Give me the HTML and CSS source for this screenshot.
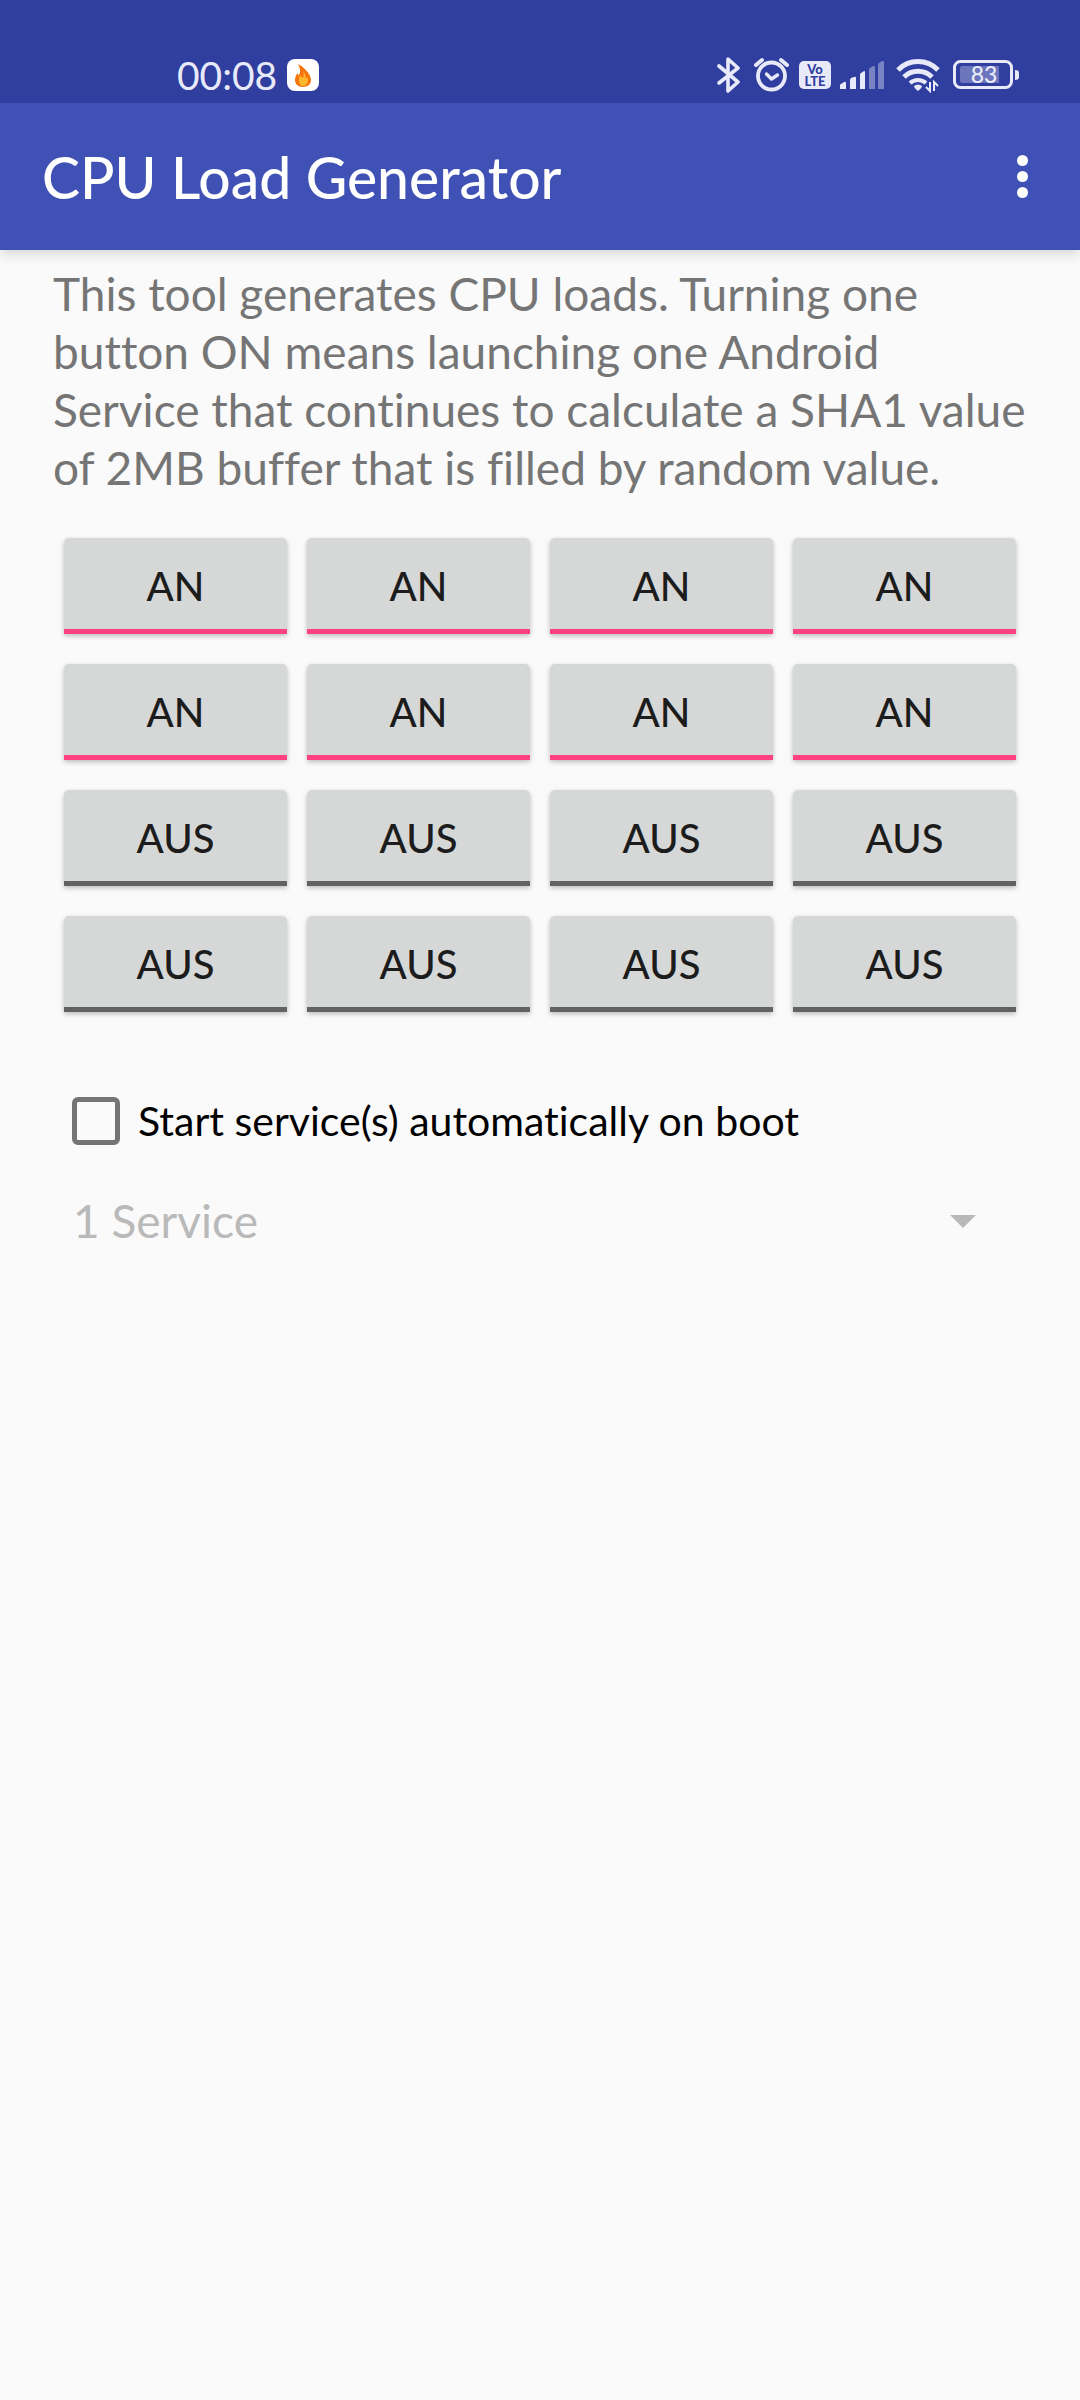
FILE: index.html
```html
<!DOCTYPE html>
<html lang="en">
<head>
    <meta charset="UTF-8">
    <meta name="viewport" content="width=device-width, initial-scale=1.0">
    <title>CPU Load Generator</title>
    <link rel="stylesheet" href="styles.css">
</head>
<body>
    <div class="status-bar">
        <span class="clock">00:08</span>
        <svg class="app-badge" width="32" height="32" viewBox="0 0 32 32">
            <rect width="32" height="32" rx="8" fill="#fff"/>
            <path d="M11 5c4 2 13 9 13 16 0 4-3 7-8 7s-8-3-8-7c0-3 1-5 3-7 0 1 0 2 1 2 2-3 1-7-1-11z" fill="#f5740c"/>
            <path d="M16 12c1 2 1 5 0 7-1-1-2-1-3-3-1 2-1 4-1 5 0 4 2 6 4 6s5-2 5-6c0-1 0-2-1-3l-1 2c-1-4-1-6-3-8z" fill="#fdb92e"/>
        </svg>
        <div class="status-icons">
            <svg width="27" height="36" viewBox="0 0 27 36" fill="none" stroke="#e8eaf9" stroke-width="3.600" stroke-linecap="round" stroke-linejoin="round">
                <path d="M2 9l19 16-10 9V2l10 9L2 26"/>
            </svg>
            <svg width="37" height="36" viewBox="0 0 37 36" fill="none" stroke="#e8eaf9" stroke-linecap="round" stroke-linejoin="round">
                <circle cx="18.500" cy="19" r="13.500" stroke-width="3.800"/>
                <path d="M13.500 17l5 5 6-4" stroke-width="3.400"/>
                <path d="M3 8l6-5M34 8l-6-5" stroke-width="4"/>
            </svg>
            <svg width="32" height="36" viewBox="0 0 32 36">
                <rect y="4" width="32" height="28" rx="5" fill="#e8eaf9"/>
                <text class="volte" x="16" y="17" text-anchor="middle">Vo</text>
                <text class="volte" x="16" y="29" text-anchor="middle">LTE</text>
            </svg>
            <svg width="47" height="36" viewBox="0 0 47 36" fill="#e8eaf9">
                <path d="M0 32v-4q0-1 1-1l3-2q2-1 2 1v6z"/>
                <path d="M10 32V23q0-1 1-2l3-1q2-1 2 1v11z"/>
                <path d="M20 32V18q0-2 1-2l3-2q1 0 1 1v17z"/>
                <path d="M29 32V13q0-2 1-2l3-2q2 0 2 1v22z" opacity="0.4"/>
                <path d="M38 32V8q0-2 1-2l3-2q2 0 2 1v27z" opacity="0.4"/>
            </svg>
            <svg width="48" height="36" viewBox="0 0 48 36" fill="none" stroke="#e8eaf9" stroke-width="5">
                <path d="M2 13a28 28 0 0 1 40 0"/>
                <path d="M8 20a20 20 0 0 1 28 0"/>
                <path d="M14 26a12 12 0 0 1 16 0" stroke-width="4"/>
                <path d="M18 29q4-3 8 0q0 2-4 5q-4-3-4-5z" fill="#e8eaf9" stroke="none"/>
                <path d="M34 25v9l-4-4M38 34v-9l4 4" stroke-width="2"/>
            </svg>
            <svg width="66" height="36" viewBox="0 0 66 36">
                <rect x="1.500" y="4.500" width="57" height="26" rx="6" fill="none" stroke="#e8eaf9" stroke-width="3"/>
                <path d="M9 9h37v17H9q-2 0-2-2V11q0-2 2-2z" fill="#6b75bb"/>
                <path d="M62 13q4 0 4 3v4q0 3-4 3z" fill="#e8eaf9"/>
                <text class="battery-level" x="31" y="26" text-anchor="middle">83</text>
            </svg>
        </div>
    </div>

    <header class="app-bar">
        <h1 class="app-title">CPU Load Generator</h1>
        <button type="button" class="menu-btn" aria-label="More options">
            <span class="dot"></span>
            <span class="dot"></span>
            <span class="dot"></span>
        </button>
    </header>

    <main class="content">
        <p class="description">This tool generates CPU loads. Turning one button ON means launching one Android Service that continues to calculate a SHA1 value of 2MB buffer that is filled by random value.</p>

        <div class="toggles">
            <button type="button" class="toggle on" aria-pressed="true">AN</button>
            <button type="button" class="toggle on" aria-pressed="true">AN</button>
            <button type="button" class="toggle on" aria-pressed="true">AN</button>
            <button type="button" class="toggle on" aria-pressed="true">AN</button>
            <button type="button" class="toggle on" aria-pressed="true">AN</button>
            <button type="button" class="toggle on" aria-pressed="true">AN</button>
            <button type="button" class="toggle on" aria-pressed="true">AN</button>
            <button type="button" class="toggle on" aria-pressed="true">AN</button>
            <button type="button" class="toggle" aria-pressed="false">AUS</button>
            <button type="button" class="toggle" aria-pressed="false">AUS</button>
            <button type="button" class="toggle" aria-pressed="false">AUS</button>
            <button type="button" class="toggle" aria-pressed="false">AUS</button>
            <button type="button" class="toggle" aria-pressed="false">AUS</button>
            <button type="button" class="toggle" aria-pressed="false">AUS</button>
            <button type="button" class="toggle" aria-pressed="false">AUS</button>
            <button type="button" class="toggle" aria-pressed="false">AUS</button>
        </div>

        <div class="boot-row">
            <input type="checkbox" id="startOnBoot" class="checkbox">
            <label for="startOnBoot">Start service(s) automatically on boot</label>
        </div>

        <div class="spinner">
            <select class="spinner-select" aria-label="Number of services" disabled>
                <option>1 Service</option>
            </select>
            <svg class="spinner-arrow" width="26" height="13" viewBox="0 0 26 13">
                <path d="M0 0h26L13 13z" fill="#b9b9b9"/>
            </svg>
        </div>
    </main>
</body>
</html>
```
FILE: styles.css
```css
* {
    box-sizing: border-box;
}

body {
    margin: 0;
    min-height: 100vh;
    background-color: #fafafa;
    font-family: Lato, "Open Sans", sans-serif;
    font-variant-ligatures: none;
}

/* System status bar */
.status-bar {
    position: relative;
    z-index: 1; /* keeps the app bar shadow off it */
    display: flex;
    align-items: center;
    height: 103px;
    padding: 47px 61px 0 177px;
    background-color: #303f9f;
    color: #e8eaf9;
}

.clock {
    font-size: 39px;
    line-height: 48px;
}

.app-badge {
    margin-left: 10px;
}

.status-icons {
    display: flex;
    gap: 9px;
    margin-left: auto;
}

.volte {
    fill: #303f9f;
    font-size: 13px;
    font-weight: 900;
}

.battery-level {
    fill: #e8eaf9;
    font-size: 23px;
    font-weight: 500;
}

/* App bar */
.app-bar {
    position: relative;
    display: flex;
    align-items: center;
    justify-content: space-between;
    height: 147px;
    padding: 0 42px;
    background-color: #3f51b5;
    color: #fff;
    box-shadow: 0 4px 12px rgba(0, 0, 0, 0.15);
}

.app-title {
    margin: 0;
    font-size: 57px;
    line-height: 72px;
    font-weight: 500;
}

.menu-btn {
    display: flex;
    flex-direction: column;
    align-items: center;
    gap: 5px;
    width: 32px;
    padding: 0;
    border: none;
    background: none;
    cursor: pointer;
}

.dot {
    width: 11px;
    height: 11px;
    border-radius: 50%;
    background-color: #fff;
}

/* Main screen */
.content {
    padding: 15px 48px 0 53px;
}

.description {
    margin: 0;
    color: #757575;
    font-size: 46px;
    line-height: 58px;
}

.toggles {
    display: grid;
    grid-template-columns: repeat(4, 1fr);
    gap: 30px 20px;
    margin: 41px 16px 0 11px;
}

.toggle {
    height: 96px;
    padding: 4px 0 0;
    border: none;
    border-bottom: 5px solid #616363;
    border-radius: 5px 5px 0 0;
    background-color: #d6d8d7;
    color: #1c1c1c;
    font-family: inherit;
    font-size: 40px;
    line-height: 48px;
    font-weight: 500;
    box-shadow: 0 2px 5px rgba(0, 0, 0, 0.25);
    cursor: pointer;
}

.toggle.on {
    border-bottom-color: #ff4081;
}

.boot-row {
    display: flex;
    align-items: center;
    gap: 18px;
    margin: 81px 0 0 19px;
    color: #000;
    font-size: 41px;
    line-height: 56px;
}

.checkbox {
    appearance: none;
    width: 48px;
    height: 48px;
    margin: 0;
    border: 5px solid #757575;
    border-radius: 6px;
}

.checkbox:checked {
    background-color: #ff4081;
    border-color: #ff4081;
}

/* Service count drop-down */
.spinner {
    position: relative;
    margin: 40px 16px 0 20px;
}

.spinner-select {
    appearance: none;
    display: block;
    width: 100%;
    height: 64px;
    padding: 0;
    border: none;
    background: none;
    color: #b9b9b9;
    font-family: inherit;
    font-size: 46px;
    line-height: 64px;
    opacity: 1;
}

.spinner-arrow {
    position: absolute;
    top: 26px;
    right: 40px;
    pointer-events: none;
}
```
